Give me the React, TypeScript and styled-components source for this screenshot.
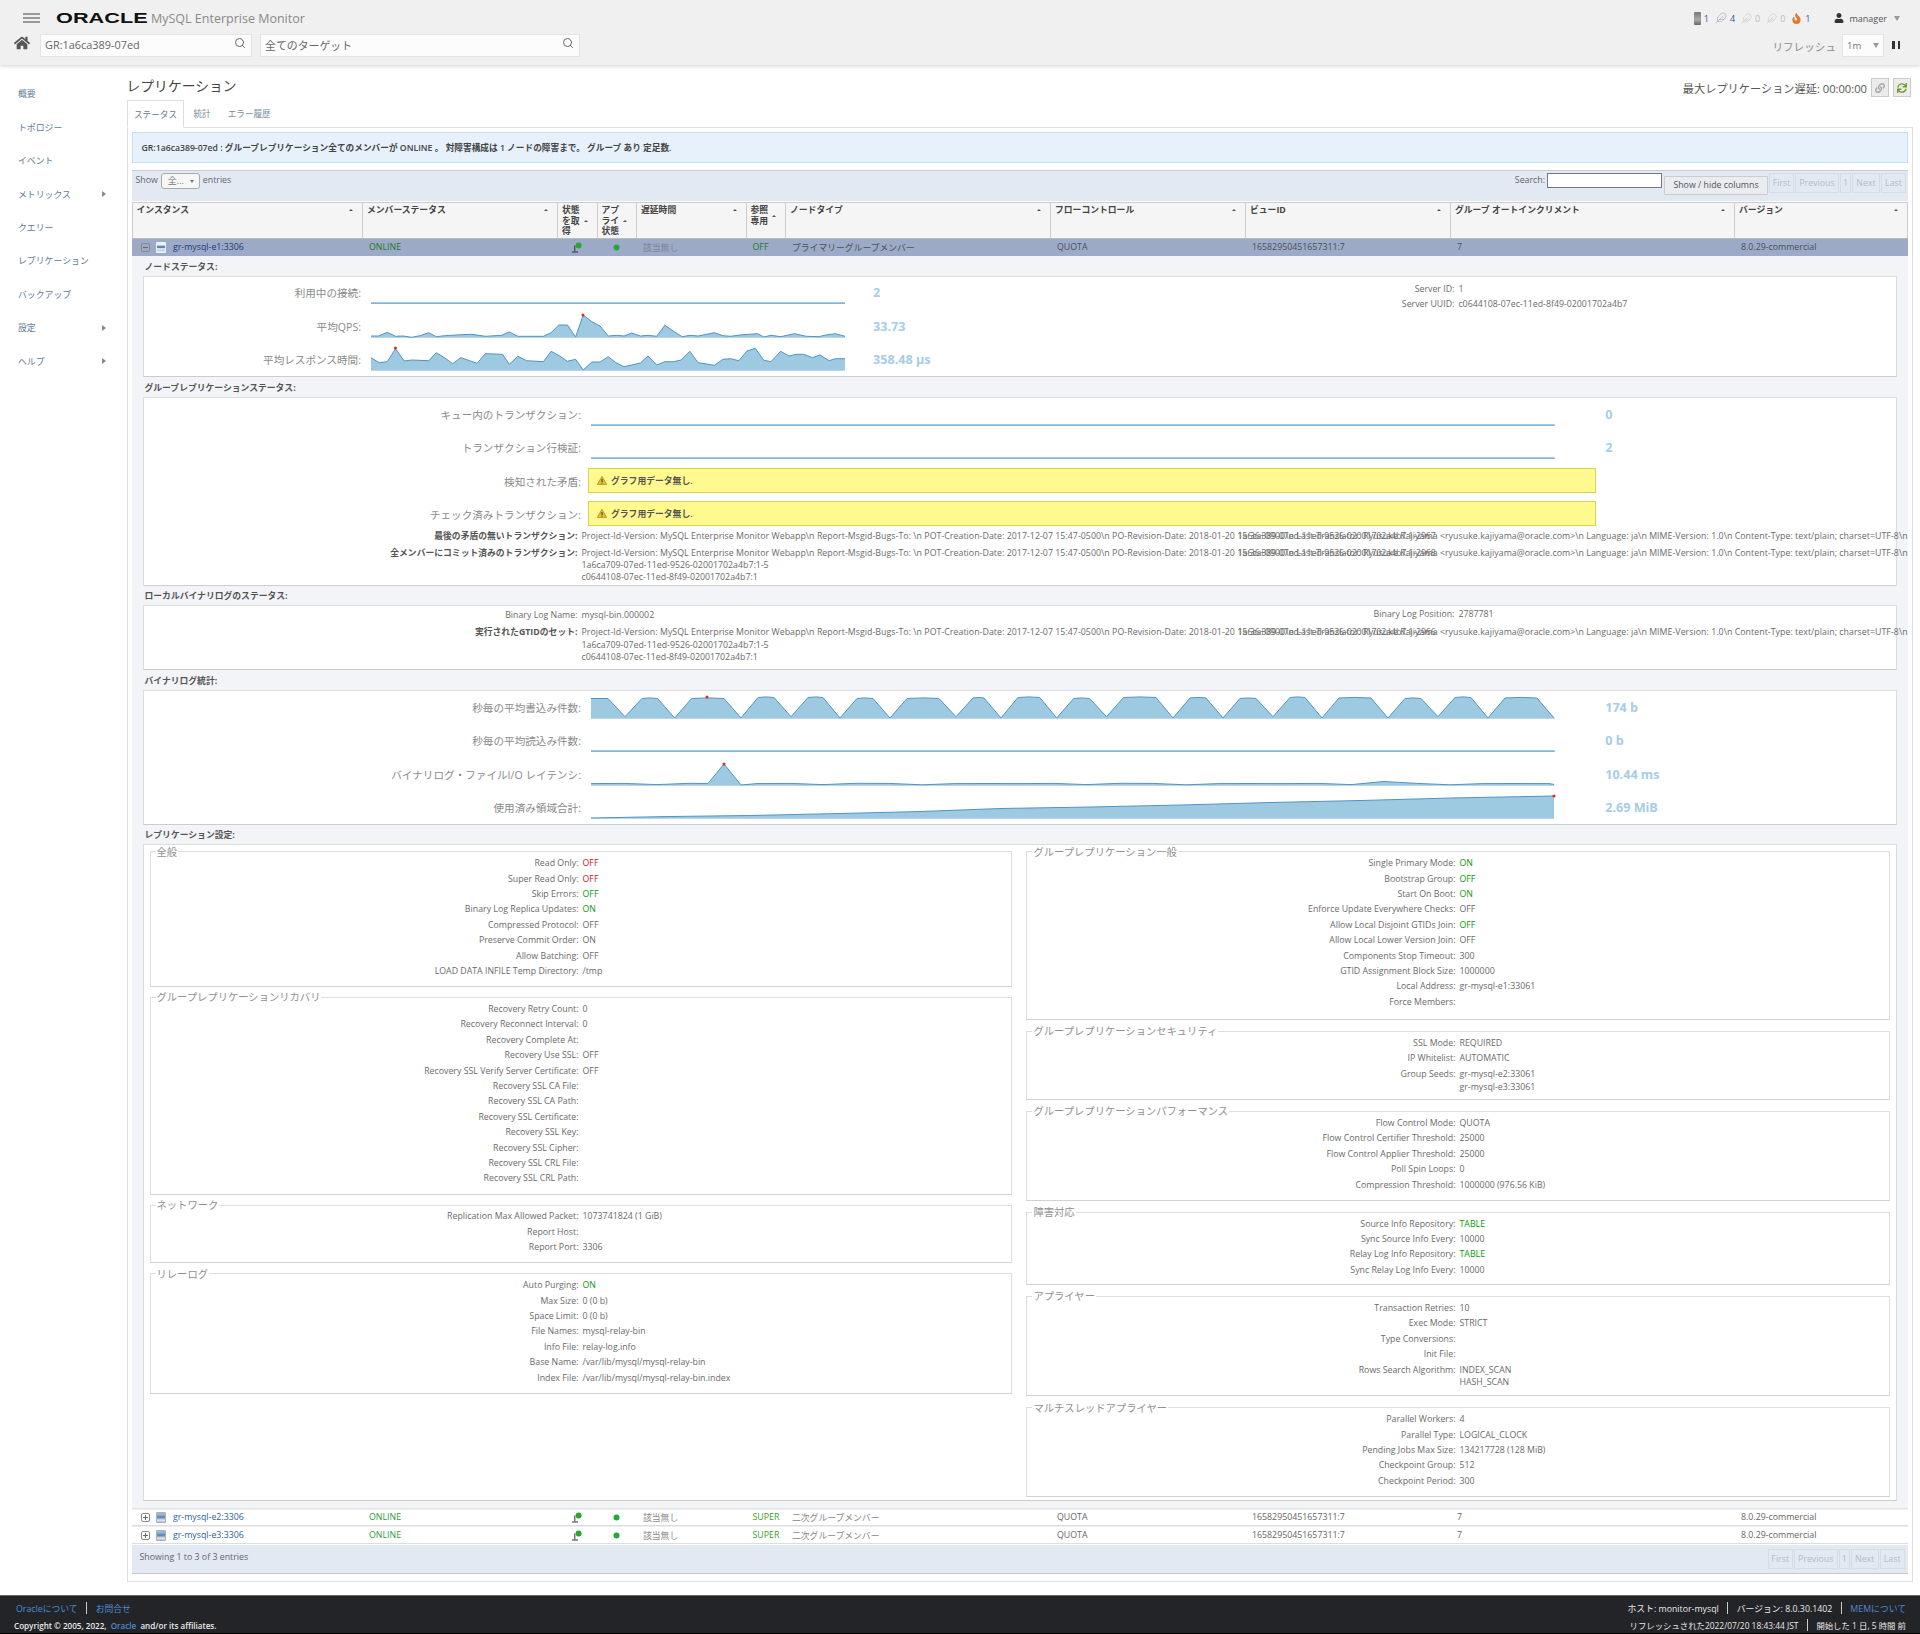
import React from 'react';
import styled, { createGlobalStyle } from 'styled-components';
import { FaHome, FaUser, FaFire, FaLink, FaSync } from 'react-icons/fa';
import { Search, Feather } from 'lucide-react';

const Global = createGlobalStyle`
  html, body { margin: 0; padding: 0; background: #fff; }
  body { font-family: "Open Sans", "Noto Sans CJK JP", sans-serif; font-size: 8.8px; color: #555; }
  * { box-sizing: border-box; }
`;

const Page = styled.div`
  width: 1920px; min-height: 1634px; display: flex; flex-direction: column; overflow: hidden;
`;

/* ---------- header ---------- */
const Header = styled.header`
  height: 65px; background: #f0f0f0; box-shadow: 0 1px 4px rgba(0,0,0,.18); position: relative; z-index: 2; flex: none;
`;
const HeaderTop = styled.div`
  height: 34px; display: flex; align-items: center; padding: 2px 20px 0 23px;
`;
const Burger = styled.div`
  width: 17px; height: 10px; margin-right: 16px; display: flex; flex-direction: column; justify-content: space-between;
  & > i { display: block; height: 2px; background: #999; }
`;
const LogoWrap = styled.div`
  width: 95px; height: 14px; position: relative; flex: none;
`;
const Logo = styled.span`
  display: inline-block; font-family: "Liberation Sans", sans-serif; font-weight: 700; font-size: 14px; line-height: 14px;
  color: #111; transform: scaleX(1.55); transform-origin: left center; white-space: nowrap;
`;
const ProductName = styled.span`
  font-size: 12.5px; color: #8a8a8a; white-space: nowrap;
`;
const HeaderSpacer = styled.div`flex: 1;`;
const StatGroup = styled.div`
  display: flex; align-items: center; font-size: 9px; color: #35599c; margin-right: 23px;
`;
const Stat = styled.span<{ $off?: boolean }>`
  display: inline-flex; align-items: center; gap: 3px; margin-left: 6px; color: ${p => (p.$off ? '#bbb' : '#35599c')};
`;
const ServerGlyph = styled.i`
  display: inline-block; width: 7px; height: 13px; background: linear-gradient(#777, #aaa 60%, #666); border-radius: 1px;
`;
const UserBox = styled.div`
  display: flex; align-items: center; font-size: 9px; color: #555; gap: 6px;
  & > i { margin-left: 1px; }
`;
const SmallCaret = styled.i`
  display: inline-block; width: 0; height: 0; border-left: 3.5px solid transparent; border-right: 3.5px solid transparent;
  border-top: 5px solid #999; margin-left: 7px;
`;
const HeaderBottom = styled.div`
  height: 23px; display: flex; align-items: center; padding: 0 20px 0 14px;
`;
const HomeBtn = styled.div`
  width: 26px; color: #555; font-size: 16px; display: flex; margin-top: -6px;
`;
const SearchBox = styled.div<{ $w: number }>`
  width: ${p => p.$w}px; height: 23px; background: #fcfcfc; border: 1px solid #e4e4e4; display: flex; align-items: center;
  justify-content: space-between; padding: 0 5px 2px 4px; margin-right: 8px; font-size: 10.9px; color: #666;
  & svg { margin-top: -4px; color: #666; }
`;
const RefreshLabel = styled.span`
  font-size: 10.6px; color: #8e8e8e; margin-right: 6px; margin-top: 2px;
`;
const RefreshSelect = styled.div`
  width: 42px; height: 23px; background: #fcfcfc; border: 1px solid #e4e4e4; display: flex; align-items: center;
  justify-content: space-between; padding: 0 4px; font-size: 9.5px; color: #777;
`;
const PauseBtn = styled.div`
  width: 8px; height: 8px; margin-left: 8px; display: flex; justify-content: space-between; margin-top: -2px;
  & > i { display: block; width: 2.5px; background: #333; }
`;

/* ---------- sidebar ---------- */
const Body = styled.div`
  flex: 1; display: flex; align-items: flex-start;
`;
const Sidebar = styled.nav`
  width: 126.5px; flex: none; padding-top: 12.3px;
`;
const NavItem = styled.div`
  height: 33.4px; width: 106px; padding-left: 18px; display: flex; align-items: center; justify-content: space-between;
  font-size: 8.9px; color: #5f7b97;
`;
const NavArrow = styled.i`
  width: 0; height: 0; border-top: 3.5px solid transparent; border-bottom: 3.5px solid transparent; border-left: 4px solid #888;
`;

/* ---------- main ---------- */
const Main = styled.main`
  width: 1786.2px; flex: none;
`;
const TitleBar = styled.div`
  height: 35px; padding: 7px 1.7px 0 0; display: flex; align-items: center; justify-content: space-between;
`;
const PageTitle = styled.h1`
  margin: 0; font-size: 13.8px; font-weight: 400; color: #444; line-height: 28px;
`;
const DelayBox = styled.div`
  display: flex; align-items: center; font-size: 11.2px; color: #555; margin-top: 3px;
`;
const SquareBtn = styled.div`
  width: 18px; height: 19px; border: 1px solid #ccc; background: #ececec; margin-left: 4px; display: flex;
  align-items: center; justify-content: center; font-size: 10px; color: #aaa;
`;
const Tabs = styled.div`
  height: 27px; display: flex; position: relative;
`;
const Tab = styled.div<{ $active?: boolean }>`
  height: ${p => (p.$active ? 28 : 27)}px; padding: 0 ${p => (p.$active ? 6.5 : 8)}px; margin-left: ${p => (p.$active ? 0 : 1)}px;
  display: flex; align-items: center; font-size: 8.6px; position: relative; z-index: 1;
  color: ${p => (p.$active ? '#5f7b97' : '#7a8ba0')}; background: ${p => (p.$active ? '#fff' : 'transparent')};
  border: ${p => (p.$active ? '1px solid #ddd' : 'none')}; border-bottom: ${p => (p.$active ? '1px solid #fff' : 'none')};
`;
const Panel = styled.section`
  border: 1px solid #ddd; padding: 4px 4px 7px;
`;
const Alert = styled.div`
  height: 31px; border: 1px solid #c8dff2; background: #e7f1fb; display: flex; align-items: center; padding-left: 9px;
  margin-bottom: 7px; font-size: 8.68px; color: #444; font-weight: 600;
`;
const Toolbar = styled.div`
  height: 31px; background: #e2e9f3; border-top: 1px solid #ccc; padding: 2px 1.7px 0 4px; display: flex; justify-content: space-between; margin-bottom: 1px;
`;
const ToolLeft = styled.div`
  display: flex; align-items: flex-start; gap: 3px; color: #666; line-height: 14px;
`;
const LenSelect = styled.div`
  width: 39px; height: 16px; border: 1px solid #aaa; border-radius: 3px; background: #f6f6f6; display: flex;
  align-items: center; justify-content: space-between; padding: 0 5px 0 6px; font-size: 9px; color: #777;
`;
const TinyCaret = styled.i`
  width: 0; height: 0; border-left: 2px solid transparent; border-right: 2px solid transparent; border-top: 3px solid #777;
`;
const ToolRight = styled.div`
  display: flex; align-items: flex-start; color: #666;
`;
const SearchLabel = styled.label`
  line-height: 14px; margin-right: 2px;
`;
const SearchInput = styled.input`
  width: 115px; height: 15px; border: 1px solid #777; background: #fff; padding: 0; margin: 0 2px 0 0;
`;
const ColumnsBtn = styled.button`
  width: 104px; height: 19px; margin: 3px 1px 0 0; border: 1px solid #ccc; background: #e9ecf1; font: inherit; color: #555; padding: 0 0 2px; border-radius: 1px;
`;
const PageButtons = styled.div`
  display: flex; gap: 1px;
`;
const PageBtn = styled.span<{ $w: number }>`
  width: ${p => p.$w}px; height: 20px; border: 1px solid #d6dce6; display: flex; align-items: center; justify-content: center;
  color: #b5bbc5; font-size: 8.8px;
`;
const columns = '230.5px 195px 39.5px 39.5px 109.5px 39.5px 265px 195px 205px 284px 1fr';
const HeadRow = styled.div`
  display: grid; grid-template-columns: ${columns}; height: 37px; background: #f5f5f5; border-top: 1px solid #ccc; border-bottom: 1px solid #bbb;
  border-left: 1px solid #ccc;
`;
const HeadCell = styled.div`
  border-right: 1px solid #ccc; padding: 2px 9px 0 4px; font-weight: 700; color: #444; line-height: 10.7px;
`;
const HeadInner = styled.div`
  display: flex; align-items: center; justify-content: space-between;
`;
const SortCaret = styled.i`
  width: 0; height: 0; flex: none; border-left: 2px solid transparent; border-right: 2px solid transparent; border-bottom: 2.5px solid #555; margin-left: 3px;
`;
const DataRow = styled.div<{ $selected?: boolean }>`
  display: grid; grid-template-columns: ${columns}; height: ${p => (p.$selected ? 17 : 17.7)}px; align-items: center;
  background: ${p => (p.$selected ? '#9daac7' : '#fff')}; border-bottom: 1px solid ${p => (p.$selected ? '#9daac7' : '#ddd')};
  border-top: ${p => (p.$selected ? 'none' : '1px solid #eee')}; color: ${p => (p.$selected ? '#4a4f5a' : '#666')};
`;
const Cell = styled.div<{ $tone?: string; $center?: boolean }>`
  padding-left: ${p => (p.$center ? 0 : 7)}px; white-space: nowrap; color: ${p => p.$tone || 'inherit'};
  ${p => (p.$center ? 'display:flex;justify-content:center;' : '')}
`;
const InstanceCell = styled.div`
  padding-left: 9.5px; display: flex; align-items: center;
`;
const InstanceName = styled.a<{ $dark?: boolean }>`
  color: ${p => (p.$dark ? '#1d3b78' : '#2f5f9e')}; margin-left: 7px;
`;
const Expander = styled.i`
  width: 9px; height: 9px; border: 1px solid #888; border-radius: 2px; position: relative; display: block; margin-right: 6px;
  &::before { content: ''; position: absolute; left: 1px; right: 1px; top: 3px; height: 1px; background: #666; }
`;
const ExpanderPlus = styled(Expander)`
  &::after { content: ''; position: absolute; top: 1px; bottom: 1px; left: 3px; width: 1px; background: #666; }
`;

/* ---------- detail ---------- */
const Detail = styled.div`
  background: #f2f4f8; padding: 0 10.5px 6.3px 11px; overflow: hidden; border-bottom: 1px solid #e3e3e3;
`;
const SectionTitle = styled.div`
  height: 19.5px; display: flex; align-items: flex-end; padding-bottom: 3px; padding-left: 2px; font-weight: 700; color: #555; line-height: 11px;
`;
const Card = styled.div<{ $h: number }>`
  height: ${p => p.$h}px; background: #fff; border: 1px solid #ddd; border-bottom: 1.5px solid #ccc;
`;
const CardSplit = styled.div`
  display: flex;
`;
const ChartStack = styled.div`
  width: 882.9px; flex: none; padding-top: .5px;
`;
const InfoCol = styled.div`
  flex: 1; padding-top: 5.5px;
`;
const ChartRow = styled.div<{ $label: number }>`
  display: grid; grid-template-columns: ${p => p.$label}px auto 1fr; height: 33.5px; align-items: start;
`;
const ChartLabel = styled.div<{ $line: number }>`
  text-align: right; font-size: 10.6px; color: #8a8a8a; line-height: ${p => p.$line}px; white-space: nowrap;
`;
const ChartSvg = styled.svg<{ $shift: number }>`
  display: block; overflow: visible; margin-left: 9.5px; margin-top: ${p => p.$shift}px;
`;
const ChartValue = styled.div<{ $gap: number; $line: number }>`
  margin-left: ${p => p.$gap}px; font-size: 12.6px; font-weight: 700; color: #a6cde6; line-height: ${p => p.$line}px; white-space: nowrap;
`;
const NoData = styled.div<{ $top: number }>`
  width: 1007.5px; height: 25.4px; margin: ${p => p.$top}px 0 0 7px; background: #fff98f; border: 1px solid #d9d24d; display: flex;
  align-items: center; padding-left: 8px; gap: 4px; font-weight: 600; color: #555;
`;
const KV = styled.div<{ $w: number }>`
  display: grid; grid-template-columns: ${p => p.$w}px 1fr; column-gap: 4px; align-items: start; line-height: 15.4px; min-height: 15.4px;
`;
const KLabel = styled.div<{ $bold?: boolean }>`
  text-align: right; white-space: nowrap; color: ${p => (p.$bold ? '#555' : '#6a6a6a')}; font-weight: ${p => (p.$bold ? 700 : 400)};
`;
const KValue = styled.div<{ $tone?: string }>`
  white-space: nowrap; color: ${p => p.$tone || '#6a6a6a'}; position: relative;
`;
const PoText = styled.span`
  letter-spacing: .04px;
`;
const ExtraLine = styled.div`
  line-height: 12px; height: 12px; margin-top: -1.7px;
  & + & { margin-top: 0; }
`;
const Overlay = styled.span`
  position: absolute; left: 656.3px; top: 0; letter-spacing: -.1px;
`;
const BoldRows = styled.div`
  margin-top: -3px; display: flex; flex-direction: column; gap: 1.6px;
`;
const BinRows = styled.div`
  padding-top: 1px; display: flex; flex-direction: column; gap: 2px;
`;
const Columns = styled.div`
  display: grid; grid-template-columns: 862.6px 863.3px; column-gap: 14.4px; padding: 2.3px 7px 0 6px;
`;
const Col = styled.div<{ $gap: number }>`
  display: flex; flex-direction: column; gap: ${p => p.$gap}px;
`;
const Field = styled.fieldset<{ $pad?: number }>`
  margin: 0; min-width: 0; border: 1px solid #ddd; border-bottom: 1.5px solid #d2d2d2; padding: 0 0 ${p => p.$pad ?? 6.8}px;
`;
const Legend = styled.legend`
  margin-left: 5px; padding: 0 1px; font-size: 10.3px; line-height: 8.6px; color: #909090;
`;
const TableFoot = styled.div`
  height: 28.7px; margin-top: 1px; background: #e2e9f3; border-bottom: 1px solid #c8c8c8; display: flex; justify-content: space-between;
  padding: 4px 3px 0 8px; color: #666; line-height: 16px;
`;

/* ---------- footer ---------- */
const Footer = styled.footer`
  height: 39px; flex: none; background: #232427; border-top: 1px solid #666; border-bottom: 1px solid #000; padding: 4px 14px 0 14px;
  display: flex; justify-content: space-between; color: #e8e8e8; font-size: 8.8px;
`;
const FootCol = styled.div<{ $right?: boolean }>`
  display: flex; flex-direction: column; gap: 1px; align-items: ${p => (p.$right ? 'flex-end' : 'flex-start')};
`;
const FootLine = styled.div<{ $bold?: boolean; $small?: boolean; $indent?: boolean }>`
  height: 16px; display: flex; align-items: center; font-weight: ${p => (p.$bold ? 600 : 400)}; white-space: pre;
  font-size: ${p => (p.$bold ? 8.1 : p.$small ? 8.4 : 8.8)}px; padding-left: ${p => (p.$indent ? 2 : 0)}px;
`;
const FootLink = styled.a`
  color: #4f8ad0;
`;
const FootSep = styled.i`
  width: 1px; height: 12px; background: #ccc; margin: 0 8.5px;
`;

/* ---------- drawings ---------- */
const ServerIcon: React.FC<{ selected?: boolean }> = ({ selected }) => (
  <svg width="10" height="11" viewBox="0 0 10 11">
    <rect width="10" height="11" rx="1" fill={selected ? '#eef2f8' : '#a8b3c0'} />
    <rect x="1" y="3.6" width="8" height="2.6" fill={selected ? '#5b86c0' : '#5b8fc8'} />
    <rect x="1" y="7.4" width="8" height="2" fill={selected ? '#c8cfdc' : '#dfe4ea'} />
  </svg>
);
const StatusIcon = () => (
  <svg width="11" height="11" viewBox="0 0 11 11">
    <circle cx="7.6" cy="3.4" r="3" fill="#2da52d" />
    <path d="M3.8 3.5 L3.8 9.4 M1 10 L7 10" stroke="#333" strokeWidth="1" fill="none" />
  </svg>
);
const Dot = () => (
  <svg width="7" height="7" viewBox="0 0 7 7"><circle cx="3.5" cy="3.5" r="3" fill="#25a83a" /></svg>
);
const WarnIcon = () => (
  <svg width="10" height="9" viewBox="0 0 10 9">
    <path d="M5 .4 L9.7 8.6 L.3 8.6 Z" fill="#f0c020" stroke="#8a7410" strokeWidth=".6" />
    <rect x="4.5" y="3" width="1" height="3" fill="#333" />
    <rect x="4.5" y="6.6" width="1" height="1" fill="#333" />
  </svg>
);

type P = [number, number];
const Sparkline: React.FC<{ w: number; pts: P[]; dot?: P; shift?: number }> = ({ w, pts, dot, shift = 0 }) => {
  const line = pts.map((p, i) => `${i ? 'L' : 'M'}${p[0].toFixed(1)} ${p[1].toFixed(1)}`).join(' ');
  const last = pts[pts.length - 1];
  return (
    <ChartSvg width={w} height={28} viewBox={`0 0 ${w} 28`} $shift={shift}>
      <path d={`${line} L${last[0]} 27.8 L${pts[0][0]} 27.8 Z`} fill="#9ecae1" />
      <rect x="0" y="27" width={w} height="1" fill="#b7d6ea" />
      <path d={line} fill="none" stroke="#4f94c6" strokeWidth="1" />
      {dot && <circle cx={dot[0]} cy={dot[1]} r="1.5" fill="#e02828" />}
    </ChartSvg>
  );
};
const flat = (w: number): P[] => [[0, 27], [w, 27]];
const fromZoom = (raw: number[][], base: number): P[] =>
  raw.map(([x, y]) => [(x - 492) / 1.96, (y - base) / 3 + 27]);

const qpsPts = fromZoom([[492,408],[507,408],[524,397],[540,409],[555,408],[572,412],[588,407],[605,398],[620,410],[636,407],[668,404],[690,403],[716,409],[748,406],[763,396],[780,409],[830,409],[845,398],[860,375],[877,375],[893,411],[908,345],[925,365],[941,378],[957,408],[973,406],[988,408],[1003,399],[1020,408],[1035,406],[1052,409],[1068,376],[1085,394],[1102,410],[1117,406],[1133,408],[1150,403],[1165,398],[1182,407],[1197,409],[1215,405],[1250,401],[1262,411],[1276,406],[1295,410],[1322,401],[1345,409],[1370,410],[1380,406],[1402,401],[1421,409]], 411);
const respPts = fromZoom([[492,475],[508,490],[524,487],[540,448],[557,485],[572,482],[605,484],[620,460],[636,475],[652,493],[668,475],[700,492],[716,463],[750,465],[763,495],[780,471],[797,484],[830,487],[845,456],[862,470],[877,486],[893,480],[908,512],[925,488],[941,488],[957,472],[972,490],[988,502],[1003,497],[1020,491],[1035,470],[1052,497],[1068,487],[1085,487],[1100,482],[1117,456],[1133,490],[1150,494],[1165,498],[1182,480],[1197,478],[1213,484],[1229,455],[1245,447],[1262,483],[1276,487],[1295,456],[1311,470],[1325,465],[1340,465],[1357,475],[1372,467],[1390,484],[1402,478],[1421,478]], 512);

const troughs = [624,673.6,740,790,839,889,955,1000,1055.7,1105.6,1172,1222,1272,1321,1387,1437,1487,1553];
const tops = [7.5,7.5,6.5,6.5,7.5,7.5,7,6.5,7.5,6.5,7,7.5,6.5,7,7.5,6.5,7];
const writePts: P[] = (() => {
  const out: P[] = [[0, 7.5], [17, 7.5]];
  troughs.forEach((t, i) => {
    const x = t - 590;
    out.push([x, i % 3 === 0 ? 25.7 : 27]);
    if (i < tops.length) {
      const next = troughs[i + 1] - 590;
      out.push([x + 17, tops[i]]);
      out.push([(x + next) / 2, tops[i] - 0.6]);
      out.push([next - 17, tops[i]]);
    }
  });
  return out;
})();
const latencyPts: P[] = (() => {
  const w = [25.6,25.4,26.6,25.3,25.4,26.8,25.6,25.5];
  const out: P[] = [];
  for (let i = 0; i < 4; i++) out.push([i * 33, w[i]]);
  out.push([117, 25.5], [133, 6], [150, 27]);
  for (let i = 0; i < 25; i++) {
    const x = 166 + i * 33;
    if (x < 960) out.push([x, x > 760 && x < 800 ? 23.5 : w[i % 8]]);
  }
  out.push([963, 26.4]);
  return out;
})();
const diskPts: P[] = [[0,27],[80,25.5],[160,24.5],[250,22.5],[330,20.5],[410,17.5],[500,16],[590,14],[680,11.5],[770,9.5],[860,7],[963,5]];

const headers: React.ReactNode[] = [
  'インスタンス', 'メンバーステータス', <>状態<br />を取<br />得</>, <>アプ<br />ライ<br />状態</>, '遅延時間', <>参照<br />専用</>,
  'ノードタイプ', 'フローコントロール', 'ビューID', 'グループ オートインクリメント', 'バージョン',
];
const navItems: [string, boolean][] = [
  ['概要', false], ['トポロジー', false], ['イベント', false], ['メトリックス', true], ['クエリー', false],
  ['レプリケーション', false], ['バックアップ', false], ['設定', true], ['ヘルプ', true],
];
const PO = 'Project-Id-Version: MySQL Enterprise Monitor Webapp\\n Report-Msgid-Bugs-To: \\n POT-Creation-Date: 2017-12-07 15:47-0500\\n PO-Revision-Date: 2018-01-20 15:36+0900\\n Last-Translator: Ryusuke Kajiyama <ryusuke.kajiyama@oracle.com>\\n Language: ja\\n MIME-Version: 1.0\\n Content-Type: text/plain; charset=UTF-8\\n';
const GTID = '1a6ca389-07ed-11ed-9526-02001702a4b7:1-';
const G = '#0a9a0a', R = '#c8202a';

type Row = { k: string; v?: string; tone?: string; more?: string[] };
type Group = { title: string; pad?: number; rows: Row[] };

const leftGroups: Group[] = [
  { title: '全般', rows: [
    { k: 'Read Only', v: 'OFF', tone: R }, { k: 'Super Read Only', v: 'OFF', tone: R }, { k: 'Skip Errors', v: 'OFF', tone: G },
    { k: 'Binary Log Replica Updates', v: 'ON', tone: G }, { k: 'Compressed Protocol', v: 'OFF' }, { k: 'Preserve Commit Order', v: 'ON' },
    { k: 'Allow Batching', v: 'OFF' }, { k: 'LOAD DATA INFILE Temp Directory', v: '/tmp' } ] },
  { title: 'グループレプリケーションリカバリ', rows: [
    { k: 'Recovery Retry Count', v: '0' }, { k: 'Recovery Reconnect Interval', v: '0' }, { k: 'Recovery Complete At' }, { k: 'Recovery Use SSL', v: 'OFF' },
    { k: 'Recovery SSL Verify Server Certificate', v: 'OFF' }, { k: 'Recovery SSL CA File' }, { k: 'Recovery SSL CA Path' }, { k: 'Recovery SSL Certificate' },
    { k: 'Recovery SSL Key' }, { k: 'Recovery SSL Cipher' }, { k: 'Recovery SSL CRL File' }, { k: 'Recovery SSL CRL Path' } ] },
  { title: 'ネットワーク', rows: [
    { k: 'Replication Max Allowed Packet', v: '1073741824 (1 GiB)' }, { k: 'Report Host' }, { k: 'Report Port', v: '3306' } ] },
  { title: 'リレーログ', rows: [
    { k: 'Auto Purging', v: 'ON', tone: G }, { k: 'Max Size', v: '0 (0 b)' }, { k: 'Space Limit', v: '0 (0 b)' }, { k: 'File Names', v: 'mysql-relay-bin' },
    { k: 'Info File', v: 'relay-log.info' }, { k: 'Base Name', v: '/var/lib/mysql/mysql-relay-bin' }, { k: 'Index File', v: '/var/lib/mysql/mysql-relay-bin.index' } ] },
];
const rightGroups: Group[] = [
  { title: 'グループレプリケーション一般', pad: 9, rows: [
    { k: 'Single Primary Mode', v: 'ON', tone: G }, { k: 'Bootstrap Group', v: 'OFF', tone: G }, { k: 'Start On Boot', v: 'ON', tone: G },
    { k: 'Enforce Update Everywhere Checks', v: 'OFF' }, { k: 'Allow Local Disjoint GTIDs Join', v: 'OFF', tone: G }, { k: 'Allow Local Lower Version Join', v: 'OFF' },
    { k: 'Components Stop Timeout', v: '300' }, { k: 'GTID Assignment Block Size', v: '1000000' }, { k: 'Local Address', v: 'gr-mysql-e1:33061' }, { k: 'Force Members' } ] },
  { title: 'グループレプリケーションセキュリティ', pad: 6.7, rows: [
    { k: 'SSL Mode', v: 'REQUIRED' }, { k: 'IP Whitelist', v: 'AUTOMATIC' }, { k: 'Group Seeds', v: 'gr-mysql-e2:33061', more: ['gr-mysql-e3:33061'] } ] },
  { title: 'グループレプリケーションパフォーマンス', rows: [
    { k: 'Flow Control Mode', v: 'QUOTA' }, { k: 'Flow Control Certifier Threshold', v: '25000' }, { k: 'Flow Control Applier Threshold', v: '25000' },
    { k: 'Poll Spin Loops', v: '0' }, { k: 'Compression Threshold', v: '1000000 (976.56 KiB)' } ] },
  { title: '障害対応', pad: 6, rows: [
    { k: 'Source Info Repository', v: 'TABLE', tone: G }, { k: 'Sync Source Info Every', v: '10000' }, { k: 'Relay Log Info Repository', v: 'TABLE', tone: G }, { k: 'Sync Relay Log Info Every', v: '10000' } ] },
  { title: 'アプライヤー', pad: 7, rows: [
    { k: 'Transaction Retries', v: '10' }, { k: 'Exec Mode', v: 'STRICT' }, { k: 'Type Conversions' }, { k: 'Init File' },
    { k: 'Rows Search Algorithm', v: 'INDEX_SCAN', more: ['HASH_SCAN'] } ] },
  { title: 'マルチスレッドアプライヤー', rows: [
    { k: 'Parallel Workers', v: '4' }, { k: 'Parallel Type', v: 'LOGICAL_CLOCK' }, { k: 'Pending Jobs Max Size', v: '134217728 (128 MiB)' },
    { k: 'Checkpoint Group', v: '512' }, { k: 'Checkpoint Period', v: '300' } ] },
];

const FieldGroup: React.FC<{ g: Group }> = ({ g }) => (
  <Field $pad={g.pad}>
    <Legend>{g.title}</Legend>
    {g.rows.map(r => (
      <KV $w={428} key={r.k}>
        <KLabel>{r.k}:</KLabel>
        <KValue $tone={r.tone}>
          {r.v}
          {r.more?.map(m => <ExtraLine key={m}>{m}</ExtraLine>)}
        </KValue>
      </KV>
    ))}
  </Field>
);

const Pager = () => (
  <PageButtons>
    <PageBtn $w={25}>First</PageBtn><PageBtn $w={44}>Previous</PageBtn><PageBtn $w={11}>1</PageBtn><PageBtn $w={28}>Next</PageBtn><PageBtn $w={25}>Last</PageBtn>
  </PageButtons>
);

const ChartLine: React.FC<{ label: string; value?: string; w: number; pts: P[]; dot?: P; wide?: boolean; line?: number; shift?: number }> = ({ label, value, w, pts, dot, wide, line = 34, shift = 0 }) => (
  <ChartRow $label={wide ? 437.5 : 217.5}>
    <ChartLabel $line={line}>{label}:</ChartLabel>
    <Sparkline w={w} pts={pts} dot={dot} shift={shift} />
    {value && <ChartValue $gap={wide ? 51 : 28.6} $line={line - 1}>{value}</ChartValue>}
  </ChartRow>
);

const NoDataLine: React.FC<{ label: string; top: number }> = ({ label, top }) => (
  <ChartRow $label={437.5}>
    <ChartLabel $line={34}>{label}:</ChartLabel>
    <NoData $top={top}><WarnIcon />グラフ用データ無し.</NoData>
  </ChartRow>
);

const MemberRow: React.FC<{ name: string }> = ({ name }) => (
  <DataRow>
    <InstanceCell><ExpanderPlus /><ServerIcon /><InstanceName>{name}</InstanceName></InstanceCell>
    <Cell $tone="#2a9a3a">ONLINE</Cell>
    <Cell $center><StatusIcon /></Cell>
    <Cell $center><Dot /></Cell>
    <Cell $tone="#8a8a8a">該当無し</Cell>
    <Cell $tone="#3aa01a">SUPER</Cell>
    <Cell $tone="#888">二次グループメンバー</Cell>
    <Cell>QUOTA</Cell>
    <Cell>16582950451657311:7</Cell>
    <Cell>7</Cell>
    <Cell>8.0.29-commercial</Cell>
  </DataRow>
);

export default function App() {
  return (
    <Page>
      <Global />
      <Header>
        <HeaderTop>
          <Burger><i /><i /><i /></Burger>
          <LogoWrap><Logo>ORACLE</Logo></LogoWrap>
          <ProductName>MySQL Enterprise Monitor</ProductName>
          <HeaderSpacer />
          <StatGroup>
            <Stat><ServerGlyph />1</Stat>
            <Stat><Feather size={12} color="#9aa8bc" strokeWidth={1.2} />4</Stat>
            <Stat $off><Feather size={11} color="#c4c4c4" strokeWidth={1.2} />0</Stat>
            <Stat $off><Feather size={11} color="#c4c4c4" strokeWidth={1.2} />0</Stat>
            <Stat><FaFire size={11} color="#e2762a" />1</Stat>
          </StatGroup>
          <UserBox><FaUser size={10} color="#333" />manager<SmallCaret /></UserBox>
        </HeaderTop>
        <HeaderBottom>
          <HomeBtn><FaHome /></HomeBtn>
          <SearchBox $w={212}>GR:1a6ca389-07ed<Search size={12} strokeWidth={2} /></SearchBox>
          <SearchBox $w={320}>全てのターゲット<Search size={12} strokeWidth={2} /></SearchBox>
          <HeaderSpacer />
          <RefreshLabel>リフレッシュ</RefreshLabel>
          <RefreshSelect>1m<SmallCaret /></RefreshSelect>
          <PauseBtn><i /><i /></PauseBtn>
        </HeaderBottom>
      </Header>
      <Body>
        <Sidebar>
          {navItems.map(([t, arrow]) => <NavItem key={t}>{t}{arrow && <NavArrow />}</NavItem>)}
        </Sidebar>
        <Main>
          <TitleBar>
            <PageTitle>レプリケーション</PageTitle>
            <DelayBox>
              最大レプリケーション遅延: 00:00:00
              <SquareBtn><FaLink /></SquareBtn>
              <SquareBtn><FaSync color="#6f9a2a" /></SquareBtn>
            </DelayBox>
          </TitleBar>
          <Tabs>
            <Tab $active>ステータス</Tab><Tab>統計</Tab><Tab>エラー履歴</Tab>
          </Tabs>
          <Panel>
            <Alert>GR:1a6ca389-07ed : グループレプリケーション全てのメンバーが ONLINE 。 対障害構成は 1 ノードの障害まで。 グループ あり 定足数.</Alert>
            <Toolbar>
              <ToolLeft>Show <LenSelect>全...<TinyCaret /></LenSelect> entries</ToolLeft>
              <ToolRight>
                <SearchLabel>Search:</SearchLabel><SearchInput />
                <ColumnsBtn>Show / hide columns</ColumnsBtn>
                <Pager />
              </ToolRight>
            </Toolbar>
            <HeadRow>
              {headers.map((h, i) => <HeadCell key={i}><HeadInner><span>{h}</span><SortCaret /></HeadInner></HeadCell>)}
            </HeadRow>
            <DataRow $selected>
              <InstanceCell><Expander /><ServerIcon selected /><InstanceName $dark>gr-mysql-e1:3306</InstanceName></InstanceCell>
              <Cell $tone="#1a7a1a">ONLINE</Cell>
              <Cell $center><StatusIcon /></Cell>
              <Cell $center><Dot /></Cell>
              <Cell $tone="#7b8296">該当無し</Cell>
              <Cell $tone="#1a7a1a">OFF</Cell>
              <Cell>プライマリーグループメンバー</Cell>
              <Cell>QUOTA</Cell>
              <Cell>16582950451657311:7</Cell>
              <Cell>7</Cell>
              <Cell>8.0.29-commercial</Cell>
            </DataRow>
            <Detail>
              <SectionTitle>ノードステータス:</SectionTitle>
              <Card $h={101.5}>
                <CardSplit>
                  <ChartStack>
                    <ChartLine label="利用中の接続" value="2" w={474} pts={flat(474)} line={32} shift={-1} />
                    <ChartLine label="平均QPS" value="33.73" w={474} pts={qpsPts} dot={[212, 5]} line={32} shift={-1} />
                    <ChartLine label="平均レスポンス時間" value="358.48 µs" w={474} pts={respPts} dot={[24.5, 5]} line={32} shift={-1} />
                  </ChartStack>
                  <InfoCol>
                    <KV $w={428}><KLabel>Server ID:</KLabel><KValue>1</KValue></KV>
                    <KV $w={428}><KLabel>Server UUID:</KLabel><KValue>c0644108-07ec-11ed-8f49-02001702a4b7</KValue></KV>
                  </InfoCol>
                </CardSplit>
              </Card>
              <SectionTitle>グループレプリケーションステータス:</SectionTitle>
              <Card $h={189.3}>
                <ChartLine wide label="キュー内のトランザクション" value="0" w={963.7} pts={flat(963.7)} />
                <ChartLine wide label="トランザクション行検証" value="2" w={963.7} pts={flat(963.7)} />
                <NoDataLine label="検知された矛盾" top={3.6} />
                <NoDataLine label="チェック済みトランザクション" top={2.8} />
                <BoldRows>
                  <KV $w={434}><KLabel $bold>最後の矛盾の無いトランザクション:</KLabel><KValue><PoText>{PO}</PoText><Overlay>{GTID}2967</Overlay></KValue></KV>
                  <KV $w={434}><KLabel $bold>全メンバーにコミット済みのトランザクション:</KLabel><KValue><PoText>{PO}</PoText><Overlay>{GTID}2968</Overlay>
                    <ExtraLine>1a6ca709-07ed-11ed-9526-02001702a4b7:1-5</ExtraLine><ExtraLine>c0644108-07ec-11ed-8f49-02001702a4b7:1</ExtraLine></KValue></KV>
                </BoldRows>
              </Card>
              <SectionTitle>ローカルバイナリログのステータス:</SectionTitle>
              <Card $h={65}>
                <BinRows>
                  <CardSplit>
                    <ChartStack>
                      <KV $w={434}><KLabel>Binary Log Name:</KLabel><KValue>mysql-bin.000002</KValue></KV>
                    </ChartStack>
                    <KV $w={428}><KLabel>Binary Log Position:</KLabel><KValue>2787781</KValue></KV>
                  </CardSplit>
                  <KV $w={434}><KLabel $bold>実行されたGTIDのセット:</KLabel><KValue><PoText>{PO}</PoText><Overlay>{GTID}2966</Overlay>
                    <ExtraLine>1a6ca709-07ed-11ed-9526-02001702a4b7:1-5</ExtraLine><ExtraLine>c0644108-07ec-11ed-8f49-02001702a4b7:1</ExtraLine></KValue></KV>
                </BinRows>
              </Card>
              <SectionTitle>バイナリログ統計:</SectionTitle>
              <Card $h={135}>
                <ChartLine wide label="秒毎の平均書込み件数" value="174 b" w={963.7} pts={writePts} dot={[116, 6]} />
                <ChartLine wide label="秒毎の平均読込み件数" value="0 b" w={963.7} pts={flat(963.7)} />
                <ChartLine wide label="バイナリログ・ファイルI/O レイテンシ" value="10.44 ms" w={963.7} pts={latencyPts} dot={[133, 6]} />
                <ChartLine wide label="使用済み領域合計" value="2.69 MiB" w={963.7} pts={diskPts} dot={[963, 5]} />
              </Card>
              <SectionTitle>レプリケーション設定:</SectionTitle>
              <Card $h={657}>
                <Columns>
                  <Col $gap={6.2}>{leftGroups.map(g => <FieldGroup key={g.title} g={g} />)}</Col>
                  <Col $gap={7.2}>{rightGroups.map(g => <FieldGroup key={g.title} g={g} />)}</Col>
                </Columns>
              </Card>
            </Detail>
            <MemberRow name="gr-mysql-e2:3306" />
            <MemberRow name="gr-mysql-e3:3306" />
            <TableFoot>
              <span>Showing 1 to 3 of 3 entries</span>
              <Pager />
            </TableFoot>
          </Panel>
        </Main>
      </Body>
      <Footer>
        <FootCol>
          <FootLine $indent><FootLink>Oracleについて</FootLink><FootSep /><FootLink>お問合せ</FootLink></FootLine>
          <FootLine $bold>Copyright © 2005, 2022,  <FootLink>Oracle</FootLink>  and/or its affiliates.</FootLine>
        </FootCol>
        <FootCol $right>
          <FootLine>ホスト: monitor-mysql<FootSep />バージョン: 8.0.30.1402<FootSep /><FootLink>MEMについて</FootLink></FootLine>
          <FootLine $small>リフレッシュされた2022/07/20 18:43:44 JST<FootSep />開始した 1 日, 5 時間 前</FootLine>
        </FootCol>
      </Footer>
    </Page>
  );
}
